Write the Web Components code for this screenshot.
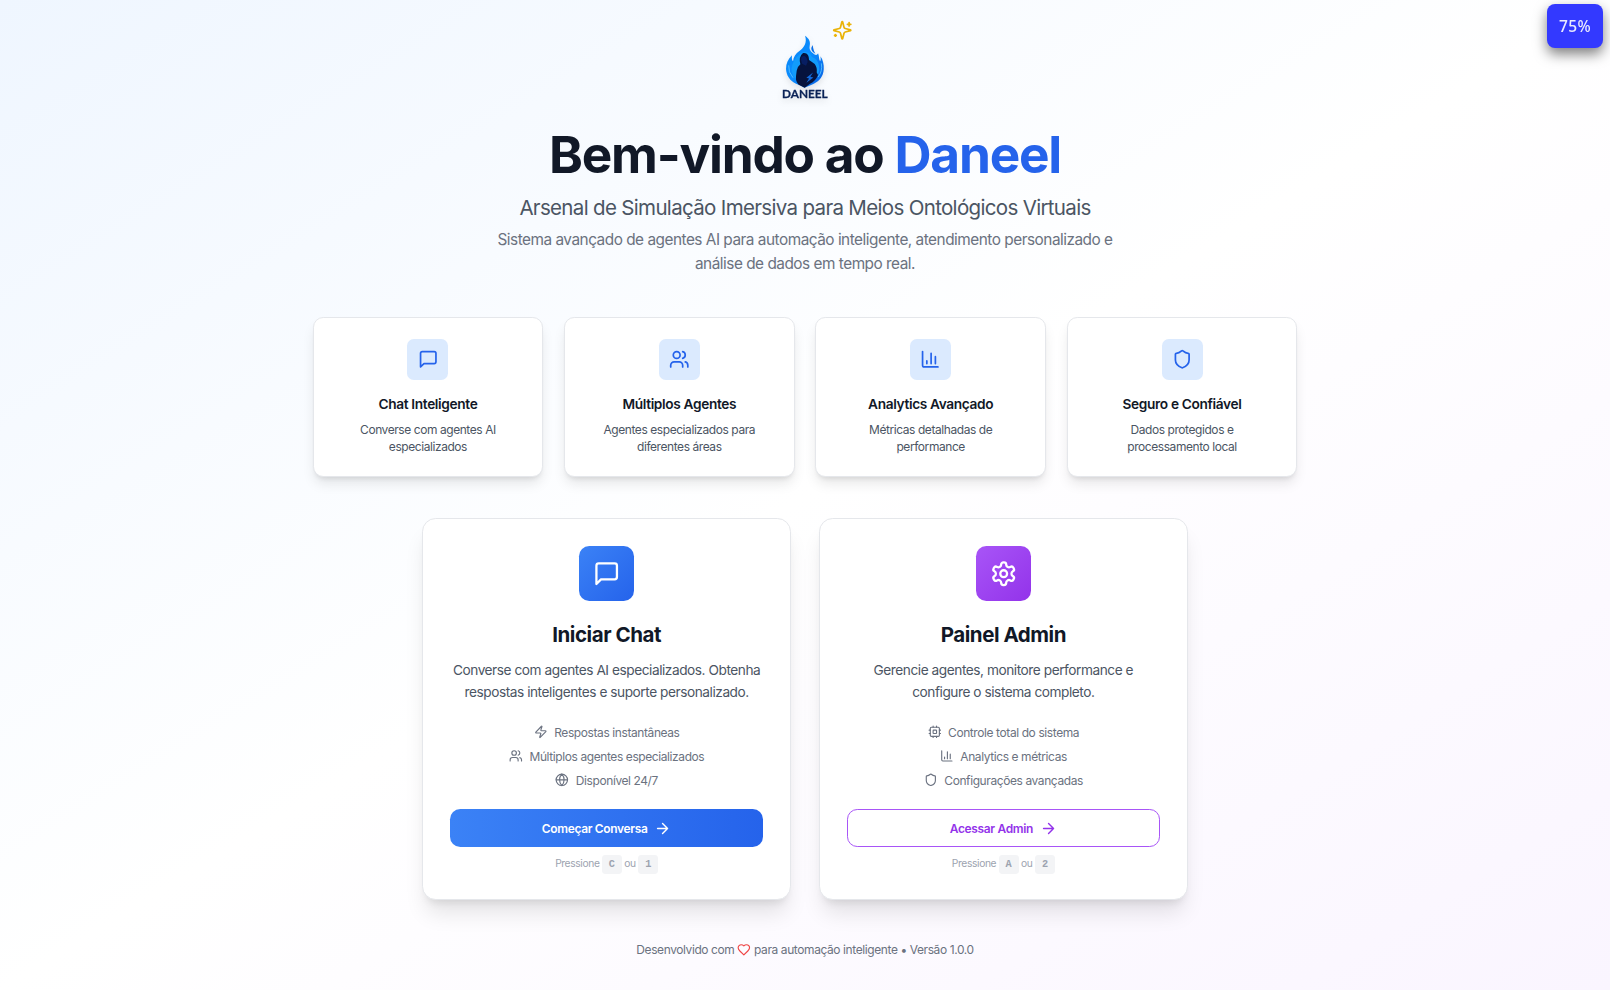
<!DOCTYPE html>
<html lang="pt-BR">
<head>
<meta charset="utf-8">
<title>Daneel</title>
<style>
  html { font-size: 13.68px; }
  body { margin: 0; font-family: Inter, "Noto Sans", sans-serif; color: #111827; }
</style>
</head>
<body>
<welcome-page>
  <welcome-hero slot="hero"></welcome-hero>
  <feature-card slot="feature" icon="message" heading="Chat Inteligente">Converse com agentes AI especializados</feature-card>
  <feature-card slot="feature" icon="users" heading="Múltiplos Agentes">Agentes especializados para diferentes áreas</feature-card>
  <feature-card slot="feature" icon="chart" heading="Analytics Avançado">Métricas detalhadas de performance</feature-card>
  <feature-card slot="feature" icon="shield" heading="Seguro e Confiável">Dados protegidos e processamento local</feature-card>
  <action-card slot="action" icon="message" heading="Iniciar Chat" button="Começar Conversa" key1="C" key2="1">
    Converse com agentes AI especializados. Obtenha respostas inteligentes e suporte personalizado.
    <list-line slot="list" icon="zap">Respostas instantâneas</list-line>
    <list-line slot="list" icon="users">Múltiplos agentes especializados</list-line>
    <list-line slot="list" icon="globe">Disponível 24/7</list-line>
  </action-card>
  <action-card slot="action" class="admin" icon="settings" heading="Painel Admin" button="Acessar Admin" key1="A" key2="2">
    Gerencie agentes, monitore performance e configure o sistema completo.
    <list-line slot="list" icon="cpu">Controle total do sistema</list-line>
    <list-line slot="list" icon="chart">Analytics e métricas</list-line>
    <list-line slot="list" icon="shield">Configurações avançadas</list-line>
  </action-card>
  <page-footer slot="footer"></page-footer>
</welcome-page>
<zoom-badge>75%</zoom-badge>

<script>
const ICONS = {
  message: '<path d="M21 15a2 2 0 0 1-2 2H7l-4 4V5a2 2 0 0 1 2-2h14a2 2 0 0 1 2 2z"/>',
  users: '<path d="M16 21v-2a4 4 0 0 0-4-4H6a4 4 0 0 0-4 4v2"/><circle cx="9" cy="7" r="4"/><path d="M22 21v-2a4 4 0 0 0-3-3.87M16 3.13a4 4 0 0 1 0 7.75"/>',
  chart: '<path d="M3 3v16a2 2 0 0 0 2 2h16M18 17V9M13 17V5M8 17v-3"/>',
  shield: '<path d="M20 13c0 5-3.5 7.5-7.66 8.95a1 1 0 0 1-.67-.01C7.5 20.5 4 18 4 13V6a1 1 0 0 1 1-1c2 0 4.5-1.2 6.24-2.72a1.17 1.17 0 0 1 1.52 0C14.51 3.81 17 5 19 5a1 1 0 0 1 1 1z"/>',
  settings: '<path d="M12.22 2h-.44a2 2 0 0 0-2 2v.18a2 2 0 0 1-1 1.73l-.43.25a2 2 0 0 1-2 0l-.15-.08a2 2 0 0 0-2.73.73l-.22.38a2 2 0 0 0 .73 2.73l.15.1a2 2 0 0 1 1 1.72v.51a2 2 0 0 1-1 1.74l-.15.09a2 2 0 0 0-.73 2.73l.22.38a2 2 0 0 0 2.73.73l.15-.08a2 2 0 0 1 2 0l.43.25a2 2 0 0 1 1 1.73V20a2 2 0 0 0 2 2h.44a2 2 0 0 0 2-2v-.18a2 2 0 0 1 1-1.73l.43-.25a2 2 0 0 1 2 0l.15.08a2 2 0 0 0 2.73-.73l.22-.39a2 2 0 0 0-.73-2.73l-.15-.08a2 2 0 0 1-1-1.74v-.5a2 2 0 0 1 1-1.74l.15-.09a2 2 0 0 0 .73-2.73l-.22-.38a2 2 0 0 0-2.73-.73l-.15.08a2 2 0 0 1-2 0l-.43-.25a2 2 0 0 1-1-1.73V4a2 2 0 0 0-2-2z"/><circle cx="12" cy="12" r="3"/>',
  zap: '<path d="M4 14a1 1 0 0 1-.78-1.63l9.9-10.2a.5.5 0 0 1 .86.46l-1.92 6.02A1 1 0 0 0 13 10h7a1 1 0 0 1 .78 1.63l-9.9 10.2a.5.5 0 0 1-.86-.46l1.92-6.02A1 1 0 0 0 11 14z"/>',
  globe: '<circle cx="12" cy="12" r="10"/><path d="M12 2a14.5 14.5 0 0 0 0 20 14.5 14.5 0 0 0 0-20M2 12h20"/>',
  cpu: '<path d="M15 2v2M15 20v2M2 15h2M2 9h2M20 15h2M20 9h2M9 2v2M9 20v2"/><rect x="4" y="4" width="16" height="16" rx="2"/><rect x="9" y="9" width="6" height="6" rx="1"/>',
  arrow: '<path d="M5 12h14M12 5l7 7-7 7"/>',
  heart: '<path d="M19 14c1.49-1.46 3-3.21 3-5.5A5.5 5.5 0 0 0 16.5 3c-1.76 0-3 .5-4.5 2-1.5-1.5-2.74-2-4.5-2A5.5 5.5 0 0 0 2 8.5c0 2.3 1.5 4.05 3 5.5l7 7Z"/>',
  sparkles: '<path d="M9.937 15.5A2 2 0 0 0 8.5 14.063l-6.135-1.582a.5.5 0 0 1 0-.962L8.5 9.936A2 2 0 0 0 9.937 8.5l1.582-6.135a.5.5 0 0 1 .963 0L14.063 8.5A2 2 0 0 0 15.5 9.937l6.135 1.581a.5.5 0 0 1 0 .964L15.5 14.063a2 2 0 0 0-1.437 1.437l-1.582 6.135a.5.5 0 0 1-.963 0zM20 3v4M22 5h-4M4 17v2M5 18H3"/>'
};
const define = (name, render) => customElements.define(name, class extends HTMLElement {
  connectedCallback() {
    if (!this.shadowRoot) this.attachShadow({ mode: 'open' }).innerHTML = render(this);
  }
});

define('line-icon', el => `
<style>
  :host { display: block; flex: none; width: 1rem; height: 1rem; }
  svg { display: block; width: 100%; height: 100%; fill: none; stroke: currentColor; stroke-width: 2; stroke-linecap: round; stroke-linejoin: round; }
</style>
<svg viewBox="0 0 24 24">${ICONS[el.getAttribute('name')]}</svg>`);

define('welcome-page', () => `
<style>
  :host { display: block; box-sizing: border-box; min-height: 990px; padding: 2rem 0 1.8rem;
    background: linear-gradient(to bottom right, #eff6ff, #fff 50%, #faf5ff); }
  .features { display: grid; grid-template-columns: repeat(4, 1fr); gap: 1.5rem; width: 72rem; margin: 0 auto 3rem; }
  .actions { display: grid; grid-template-columns: repeat(2, 1fr); gap: 2rem; width: 56rem; margin: 0 auto 3rem; }
</style>
<slot name="hero"></slot>
<div class="features"><slot name="feature"></slot></div>
<div class="actions"><slot name="action"></slot></div>
<slot name="footer"></slot>`);

define('daneel-logo', () => `
<style>
  :host { display: block; width: 6rem; height: 6rem; filter: drop-shadow(0 3px 3px rgba(0,0,0,.10)); }
  svg { display: block; width: 100%; height: 100%; overflow: visible; }
  text { font: 700 36px Lato, sans-serif; fill: #0b2357; stroke: #0b2357; stroke-width: .8; }
</style>
<svg viewBox="12 52 246 246">
  <defs>
    <linearGradient id="f" x1="0" y1="0" x2="1" y2="1">
      <stop offset="0" stop-color="#0784f5"/><stop offset=".5" stop-color="#0b8cff"/><stop offset="1" stop-color="#0a5fe0"/>
    </linearGradient>
  </defs>
  <path fill="url(#f)" d="M135 78C147 86 152 96 149 108C147 117 150 124 158 130C165 136 170 139 174 131C178 141 176 148 180 155C183 151 182 145 181 140C189 150 192 166 191 179C190 201 178 214 160 223Q146 229 133 234Q121 227 108 222C89 213 79 197 78 178C78 162 84 148 96 137Q94 150 99 155C100 141 107 132 118 124C132 113 142 99 135 78Z"/>
  <path fill="#0a6fe8" d="M159 106C150 115 153 125 166 132Q161 124 160 117C159 113 158 110 159 106Z"/>
  <path fill="#129bfb" d="M97 165Q106 138 131 126Q149 126 156 142Q173 147 177 169Q181 191 162 209L108 209Q89 189 97 165Z"/>
  <path fill="none" stroke="#5cc8ff" stroke-width="2.5" d="M86 167Q84 187 99 204M184 161Q188 185 174 202"/>
  <path fill="#06133d" d="M129 130C142 128 147 138 147 151Q156 157 164 163Q172 174 170 188L174 196Q167 214 150 222L134 234L116 225Q106 215 108 199L110 183Q112 171 121 164Q115 141 129 130Z"/>
  <path fill="#071e62" d="M124 142Q121 151 126 162L138 168L143 157Q142 143 132 138Z"/>
  <path fill="#1269d9" d="M159 188L139 204L147 206L139 219L160 203L151 201Z"/>
  <text x="66" y="266" textLength="137" lengthAdjust="spacingAndGlyphs">DANEEL</text>
</svg>`);

define('welcome-hero', () => `
<style>
  :host { display: block; text-align: center; margin-bottom: 3rem; }
  .logo { position: relative; width: 6rem; height: 6rem; margin: 0 auto 1.4rem; }
  .spark { position: absolute; top: -.56rem; right: -.5rem; width: 1.5rem; height: 1.5rem; color: #eab308; }
  h1 { margin: 0 0 1rem; font-size: 3.75rem; line-height: 1; font-weight: 700; letter-spacing: -.0235em; }
  h1 span { color: #2563eb; }
  h2 { margin: 0 0 .5rem; font-size: 1.5rem; line-height: 2rem; font-weight: 400; letter-spacing: -.0328em; color: #4b5563; }
  p { width: 48rem; margin: 0 auto; font-size: 1.125rem; line-height: 1.772rem; letter-spacing: -.0323em; color: #6b7280; }
</style>
<div class="logo"><daneel-logo></daneel-logo><line-icon class="spark" name="sparkles"></line-icon></div>
<h1>Bem-vindo ao <span>Daneel</span></h1>
<h2>Arsenal de Simulação Imersiva para Meios Ontológicos Virtuais</h2>
<p>Sistema avançado de agentes AI para automação inteligente, atendimento personalizado e<br>análise de dados em tempo real.</p>`);

define('feature-card', el => `
<style>
  :host { display: block; box-sizing: border-box; padding: 1.5rem; text-align: center; background: #fff; border: 1px solid #e5e7eb; border-radius: .75rem;
    box-shadow: 0 .625rem .9375rem -.1875rem rgba(0,0,0,.1), 0 .25rem .375rem -.25rem rgba(0,0,0,.1); }
  .tile { display: grid; place-items: center; width: 3rem; height: 3rem; margin: 0 auto 1.04rem; border-radius: .5rem; background: #dbeafe; color: #2563eb; }
  line-icon { width: 1.5rem; height: 1.5rem; }
  h3 { margin: 0 0 .46rem; font-size: 1rem; line-height: 1.5rem; font-weight: 600; letter-spacing: -.025em; }
  p { margin: 0; font-size: .875rem; line-height: 1.25rem; letter-spacing: -.035em; color: #4b5563; }
</style>
<div class="tile"><line-icon name="${el.getAttribute('icon')}"></line-icon></div>
<h3>${el.getAttribute('heading')}</h3>
<p><slot></slot></p>`);

define('list-line', el => `
<style>
  :host { display: flex; align-items: center; justify-content: center; gap: .5rem; font-size: .875rem; line-height: 1.25rem; letter-spacing: -.033em; color: #6b7280; }
</style>
<line-icon name="${el.getAttribute('icon')}"></line-icon><span><slot></slot></span>`);

define('action-card', el => `
<style>
  :host { display: block; box-sizing: border-box; padding: 2rem; text-align: center; background: #fff; border: 1px solid #e5e7eb; border-radius: 1rem;
    box-shadow: 0 1.25rem 1.5625rem -.3125rem rgba(0,0,0,.1), 0 .5rem .625rem -.375rem rgba(0,0,0,.1); }
  .tile { display: grid; place-items: center; width: 4rem; height: 4rem; margin: 0 auto 1.5rem; border-radius: .75rem; color: #fff; background: linear-gradient(to bottom right, #3b82f6, #2563eb); }
  :host(.admin) .tile { background: linear-gradient(to bottom right, #a855f7, #9333ea); }
  .tile line-icon { width: 2rem; height: 2rem; }
  h2 { margin: 0 0 .75rem; font-size: 1.5rem; line-height: 2rem; font-weight: 700; letter-spacing: -.022em; }
  p { margin: 0 0 1.5rem; font-size: 1rem; line-height: 1.625rem; letter-spacing: -.033em; color: #4b5563; }
  .list { display: flex; flex-direction: column; gap: .5rem; margin-bottom: 1.5rem; }
  button { display: flex; align-items: center; justify-content: center; gap: .5rem; box-sizing: border-box; width: 100%; height: 2.78rem; padding: .06rem 0 0; border: 0; border-radius: .75rem;
    font: 600 .875rem/1.25rem Inter, sans-serif; letter-spacing: -.027em; color: #fff; background: linear-gradient(to right, #3b82f6, #2563eb); }
  :host(.admin) button { border: 1px solid #a855f7; background: #fff; color: #9333ea; }
  button line-icon { width: 1.25rem; height: 1.25rem; }
  .hint { margin: .73rem 0 .03rem; font-size: .75rem; line-height: 1rem; letter-spacing: -.036em; color: #9ca3af; }
  kbd { display: inline-block; margin: -.25rem 0; padding: .25rem .5rem; border-radius: .25rem; background: #f3f4f6; font: 700 .75rem/.9rem "Liberation Mono", monospace; letter-spacing: 0; }
</style>
<div class="tile"><line-icon name="${el.getAttribute('icon')}"></line-icon></div>
<h2>${el.getAttribute('heading')}</h2>
<p><slot></slot></p>
<div class="list"><slot name="list"></slot></div>
<button type="button"><span>${el.getAttribute('button')}</span><line-icon name="arrow"></line-icon></button>
<div class="hint">Pressione <kbd>${el.getAttribute('key1')}</kbd> ou <kbd>${el.getAttribute('key2')}</kbd></div>`);

define('page-footer', () => `
<style>
  :host { display: block; text-align: center; font-size: .875rem; line-height: 1.25rem; letter-spacing: -.033em; color: #6b7280; }
  line-icon { display: inline-block; vertical-align: -.2rem; color: #ef4444; }
</style>
Desenvolvido com <line-icon name="heart"></line-icon> para automação inteligente • Versão 1.0.0`);

define('zoom-badge', () => `
<style>
  :host { position: fixed; top: 4px; right: 7px; display: grid; place-items: center; box-sizing: border-box; width: 56px; height: 44px; padding-top: 2px; border-radius: 8px;
    background: #3339ff; color: #e9eaff; font: 500 15.5px/1 "Noto Sans", sans-serif; letter-spacing: .3px; box-shadow: 0 6px 13px rgba(0,0,0,.5); }
</style>
<span><slot></slot></span>`);
</script>
</body>
</html>
